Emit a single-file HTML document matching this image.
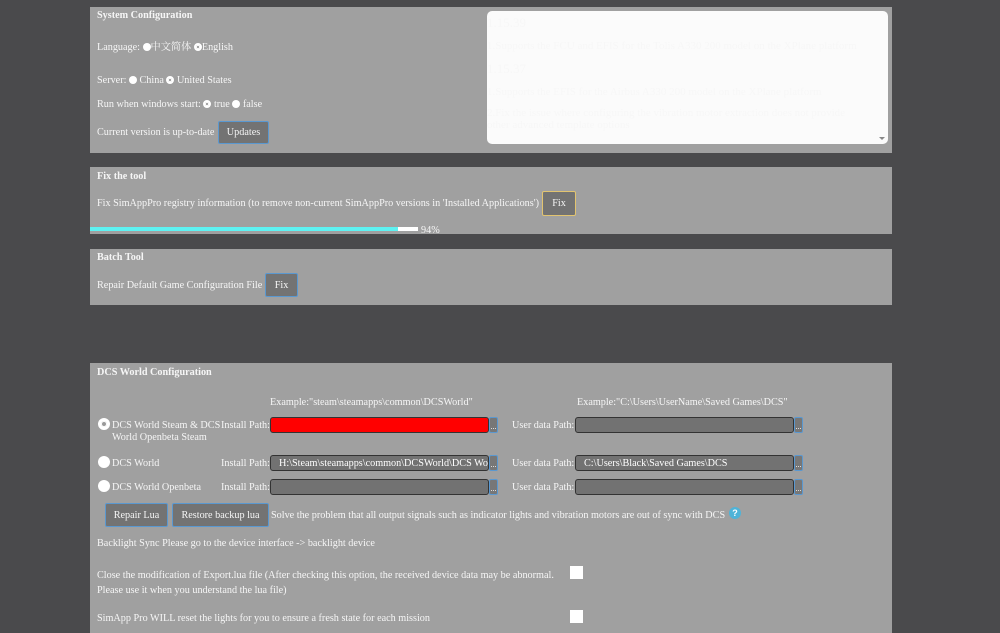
<!DOCTYPE html><html><head><meta charset="utf-8"><style>
body{margin:0;width:1000px;height:629px;background:#4a4a4c;overflow:hidden;font-family:"Liberation Serif","Noto Serif CJK SC",serif;font-size:10.2px;color:#f6f6f6;position:relative}
.p{position:absolute;left:90px;width:802px;background:#a0a0a0}
.a{position:absolute;white-space:nowrap;line-height:12px;margin-top:2px}
b.a{font-weight:bold}
.btn{position:absolute;background:#737373;border:1.5px solid #5a98d0;border-radius:2px;box-sizing:border-box;text-align:center;color:#f6f6f6;padding-top:2px}
.r{display:inline-block;width:8px;height:8px;border-radius:50%;background:#fff;vertical-align:-1px;box-sizing:border-box}
.r.on{border:2px solid #fff;background:#888;box-shadow:inset 0 0 0 1px #fff}
.in{position:absolute;height:16px;box-sizing:border-box;border:1.5px solid #333;border-radius:3px;background:#727272;color:#fff;padding-left:8px;line-height:15px;overflow:hidden;white-space:nowrap}
.dot{position:absolute;width:9px;height:16px;box-sizing:border-box;border:1px solid #5a98d0;background:#777;border-radius:2px;font-size:8px;line-height:18px;text-align:center}
.big{position:absolute;width:12px;height:12px;border-radius:50%;background:#fff}
.cb{position:absolute;width:13px;height:13px;background:#fff}
</style></head><body>
<div class="p" style="top:7px;height:146px"></div>
<b class="a" style="left:97px;top:8px">System Configuration</b>
<div class="a" style="left:97px;top:40px">Language: <span class="r"></span>中文简体 <span class="r on"></span>English</div>
<div class="a" style="left:97px;top:73px">Server: <span class="r"></span> China <span class="r on"></span> United States</div>
<div class="a" style="left:97px;top:97px">Run when windows start: <span class="r on"></span> true <span class="r"></span> false</div>
<div class="a" style="left:97px;top:125px">Current version is up-to-date</div>
<div class="btn" style="left:218px;top:121px;width:51px;height:23px;line-height:18px">Updates</div>
<div style="position:absolute;left:487px;top:11px;width:401px;height:133px;background:#fbfbfb;border-radius:5px;color:#f7f7f7;font-size:11px;overflow:hidden">
<div style="position:absolute;left:0;top:4px;font-size:13px">1.15.39</div>
<div style="position:absolute;left:0;top:29px">1.Supports the FCU and EFIS for the Tolis A330 200 model on the XPlane platform</div>
<div style="position:absolute;left:0;top:50px;font-size:13px">1.15.37</div>
<div style="position:absolute;left:0;top:75px">1.Supports the EFIS for the Airbus A330 200 model on the XPlane platform</div>
<div style="position:absolute;left:0;top:96px;width:370px">2.Fix the issue where configuring the vibration motor extraction does not provide other advanced template options</div>
<div style="position:absolute;right:3px;bottom:4px;width:0;height:0;border-left:3px solid transparent;border-right:3px solid transparent;border-top:3px solid #888"></div>
</div>
<div class="p" style="top:167px;height:67px"></div>
<b class="a" style="left:97px;top:169px">Fix the tool</b>
<div class="a" style="left:97px;top:196px">Fix SimAppPro registry information (to remove non-current SimAppPro versions in 'Installed Applications')</div>
<div class="btn" style="left:542px;top:191px;width:34px;height:25px;line-height:20px;border-color:#e2c470">Fix</div>
<div style="position:absolute;left:90px;top:227px;width:328px;height:4px;background:#fff"></div>
<div style="position:absolute;left:90px;top:227px;width:308px;height:4px;background:#5ef2f2"></div>
<div class="a" style="left:421px;top:223px">94%</div>
<div class="p" style="top:249px;height:56px"></div>
<b class="a" style="left:97px;top:250px">Batch Tool</b>
<div class="a" style="left:97px;top:278px">Repair Default Game Configuration File</div>
<div class="btn" style="left:265px;top:273px;width:33px;height:24px;line-height:19px">Fix</div>
<div class="p" style="top:363px;height:270px"></div>
<b class="a" style="left:97px;top:365px">DCS World Configuration</b>
<div class="a" style="left:270px;top:395px">Example:"steam\steamapps\common\DCSWorld"</div>
<div class="a" style="left:577px;top:395px">Example:"C:\Users\UserName\Saved Games\DCS"</div>
<div class="big" style="left:98px;top:418px;border:3px solid #fff;box-sizing:border-box;background:#999;box-shadow:inset 0 0 0 1px #fff"></div>
<div class="a" style="left:112px;top:418px">DCS World Steam &amp; DCS<br>World Openbeta Steam</div>
<div class="a" style="left:221px;top:418px">Install Path:</div>
<div class="in" style="left:270px;top:417px;width:219px;background:#f00"></div>
<div class="dot" style="left:489px;top:417px">...</div>
<div class="a" style="left:512px;top:418px">User data Path:</div>
<div class="in" style="left:575px;top:417px;width:219px"></div>
<div class="dot" style="left:794px;top:417px">...</div>
<div class="big" style="left:98px;top:456px"></div>
<div class="a" style="left:112px;top:456px">DCS World</div>
<div class="a" style="left:221px;top:456px">Install Path:</div>
<div class="in" style="left:270px;top:455px;width:219px">H:\Steam\steamapps\common\DCSWorld\DCS World</div>
<div class="dot" style="left:489px;top:455px">...</div>
<div class="a" style="left:512px;top:456px">User data Path:</div>
<div class="in" style="left:575px;top:455px;width:219px">C:\Users\Black\Saved Games\DCS</div>
<div class="dot" style="left:794px;top:455px">...</div>
<div class="big" style="left:98px;top:480px"></div>
<div class="a" style="left:112px;top:480px">DCS World Openbeta</div>
<div class="a" style="left:221px;top:480px">Install Path:</div>
<div class="in" style="left:270px;top:479px;width:219px"></div>
<div class="dot" style="left:489px;top:479px">...</div>
<div class="a" style="left:512px;top:480px">User data Path:</div>
<div class="in" style="left:575px;top:479px;width:219px"></div>
<div class="dot" style="left:794px;top:479px">...</div>
<div class="btn" style="left:105px;top:503px;width:63px;height:24px;line-height:19px">Repair Lua</div>
<div class="btn" style="left:172px;top:503px;width:97px;height:24px;line-height:19px">Restore backup lua</div>
<div class="a" style="left:271px;top:508px">Solve the problem that all output signals such as indicator lights and vibration motors are out of sync with DCS</div>
<div style="position:absolute;left:729px;top:507px;width:12px;height:12px;border-radius:50%;background:#4fb3d8;color:#fff;font:bold 9px/12px 'Liberation Sans',sans-serif;text-align:center">?</div>
<div class="a" style="left:97px;top:536px">Backlight Sync Please go to the device interface -&gt; backlight device</div>
<div class="a" style="left:97px;top:566px;line-height:15px">Close the modification of Export.lua file (After checking this option, the received device data may be abnormal.<br>Please use it when you understand the lua file)</div>
<div class="cb" style="left:570px;top:566px"></div>
<div class="a" style="left:97px;top:611px">SimApp Pro WILL reset the lights for you to ensure a fresh state for each mission</div>
<div class="cb" style="left:570px;top:610px"></div>
</body></html>
